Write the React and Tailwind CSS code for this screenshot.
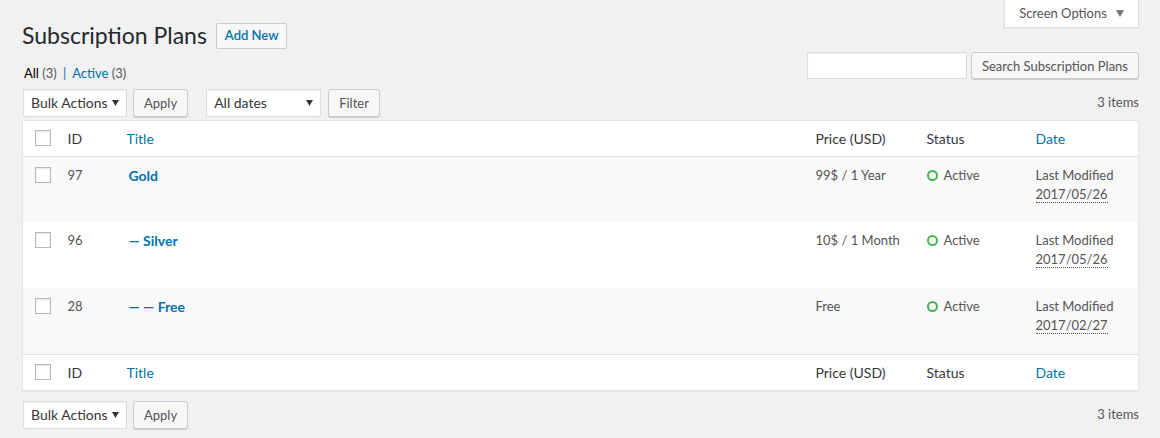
import React from 'react';

const plans = [
    { id: 97, title: 'Gold', price: '99$ / 1 Year', date: '2017/05/26' },
    { id: 96, title: '— Silver', price: '10$ / 1 Month', date: '2017/05/26' },
    { id: 28, title: '— — Free', price: 'Free', date: '2017/02/27' },
];

const font = { fontFamily: 'Lato, "Open Sans", sans-serif' };

const Caret = ({ color = '#333', size = 7 }) => (
    <svg width={size} height={size - 1} viewBox="0 0 8 7" className="shrink-0">
        <path d="M0 0 H8 L4 7 Z" fill={color} />
    </svg>
);

const Button = ({ children, className = '' }) => (
    <button className={`h-7 px-[10px] text-[13px] leading-[26px] text-[#555] bg-[#f7f7f7] border border-[#ccc] rounded-[3px] shadow-[0_1px_0_#ccc] ${className}`}>
        {children}
    </button>
);

const Select = ({ label, width }) => (
    <div className={`h-7 ${width} flex items-center justify-between pl-[7px] pr-[7px] bg-white border border-[#ddd] shadow-[inset_0_1px_2px_rgba(0,0,0,0.07)] text-[14px] text-[#32373c]`}>
        <span className="whitespace-nowrap">{label}</span>
        <Caret size={7} />
    </div>
);

const Checkbox = () => (
    <div className="w-4 h-4 bg-white border border-[#b4b9be] shadow-[inset_0_1px_2px_rgba(0,0,0,0.1)]" />
);

const HeaderRow = ({ top }) => (
    <tr className={`h-9 bg-white ${top ? 'border-b border-[#e1e1e1]' : 'border-t border-[#e1e1e1]'}`}>
        <td className="w-[35px] pl-[12px] align-middle"><Checkbox /></td>
        <td className="w-[59px] pl-[10px] text-[14px] text-[#32373c] align-middle">ID</td>
        <td className="pl-[10px] text-[14px] text-[#0073aa] align-middle">Title</td>
        <td className="w-[111px] pl-[10px] text-[14px] text-[#32373c] align-middle">Price (USD)</td>
        <td className="w-[109px] pl-[10px] text-[14px] text-[#32373c] align-middle">Status</td>
        <td className="w-[113px] pl-[10px] text-[14px] text-[#0073aa] align-middle">Date</td>
    </tr>
);

export default function App() {
    return (
        <div className="min-h-[438px] bg-[#f1f1f1] text-[13px] text-[#444]" style={font}>
            <div className="flex justify-end pr-[21px]">
                <div className="h-7 w-[135px] flex items-center justify-center gap-[9px] bg-white border border-t-0 border-[#ddd] shadow-[0_0_0_1px_rgba(0,0,0,0.02)] text-[13px] text-[#555]">
                    <span>Screen Options</span>
                    <Caret color="#72777c" size={8} />
                </div>
            </div>

            <div className="pl-[22px] pr-[21px]">
                <div className="flex items-center gap-[9px] -mt-[7px]">
                    <h1 className="text-[23px] leading-[29px] text-[#23282d]">Subscription Plans</h1>
                    <div className="h-[26px] px-[8px] flex items-center bg-[#f7f7f7] border border-[#ccc] rounded-[2px] text-[13px] font-semibold text-[#0073aa]">Add New</div>
                </div>

                <div className="flex justify-between items-start">
                    <div className="mt-[14px] text-[13px] text-[#555] pl-[2px]">
                        <span className="text-black">All</span> (3) <span className="mx-[3px] text-[#0073aa]">|</span> <span className="text-[#0073aa]">Active</span> (3)
                    </div>
                    <div className="flex gap-[4px] mt-[2px]">
                        <div className="w-[160px] h-[27px] bg-white border border-[#ddd] shadow-[inset_0_1px_2px_rgba(0,0,0,0.07)]" />
                        <Button className="h-[27px]">Search Subscription Plans</Button>
                    </div>
                </div>

                <div className="flex items-center justify-between mt-[5px] pl-[1px]">
                    <div className="flex items-center">
                        <Select label="Bulk Actions" width="w-[104px]" />
                        <Button className="ml-[6px]">Apply</Button>
                        <Select label="All dates" width="w-[115px] ml-[18px]" />
                        <Button className="ml-[7px]">Filter</Button>
                    </div>
                    <div className="text-[13px] text-[#555]">3 items</div>
                </div>

                <table className="w-full mt-[3px] border border-[#e5e5e5] shadow-[0_1px_1px_rgba(0,0,0,0.04)] border-collapse">
                    <thead><HeaderRow top /></thead>
                    <tbody>
                        {plans.map((p, i) => (
                            <tr key={p.id} className={`h-[66px] ${i % 2 === 0 ? 'bg-[#f9f9f9]' : 'bg-white'}`}>
                                <td className="pl-[12px] pt-[10px] align-top"><Checkbox /></td>
                                <td className="pl-[10px] pt-[9px] align-top text-[13px] text-[#555]">{p.id}</td>
                                <td className="pl-[12px] pt-[8px] align-top text-[14px] font-bold text-[#0073aa]">{p.title}</td>
                                <td className="pl-[10px] pt-[9px] align-top text-[13px] text-[#555]">{p.price}</td>
                                <td className="pl-[10px] pt-[9px] align-top text-[13px] text-[#555]">
                                    <span className="inline-flex items-center gap-[6px]">
                                        <span className="w-[11px] h-[11px] rounded-full border-2 border-[#46b450]" />
                                        Active
                                    </span>
                                </td>
                                <td className="pl-[10px] pt-[9px] align-top text-[13px] leading-[19px] text-[#555]">
                                    Last Modified<br />
                                    <span className="border-b border-dotted border-[#555]">{p.date}</span>
                                </td>
                            </tr>
                        ))}
                    </tbody>
                    <tfoot><HeaderRow /></tfoot>
                </table>

                <div className="flex items-center justify-between mt-[10px] pl-[1px]">
                    <div className="flex items-center">
                        <Select label="Bulk Actions" width="w-[104px]" />
                        <Button className="ml-[6px]">Apply</Button>
                    </div>
                    <div className="text-[13px] text-[#555]">3 items</div>
                </div>
            </div>
        </div>
    );
}
